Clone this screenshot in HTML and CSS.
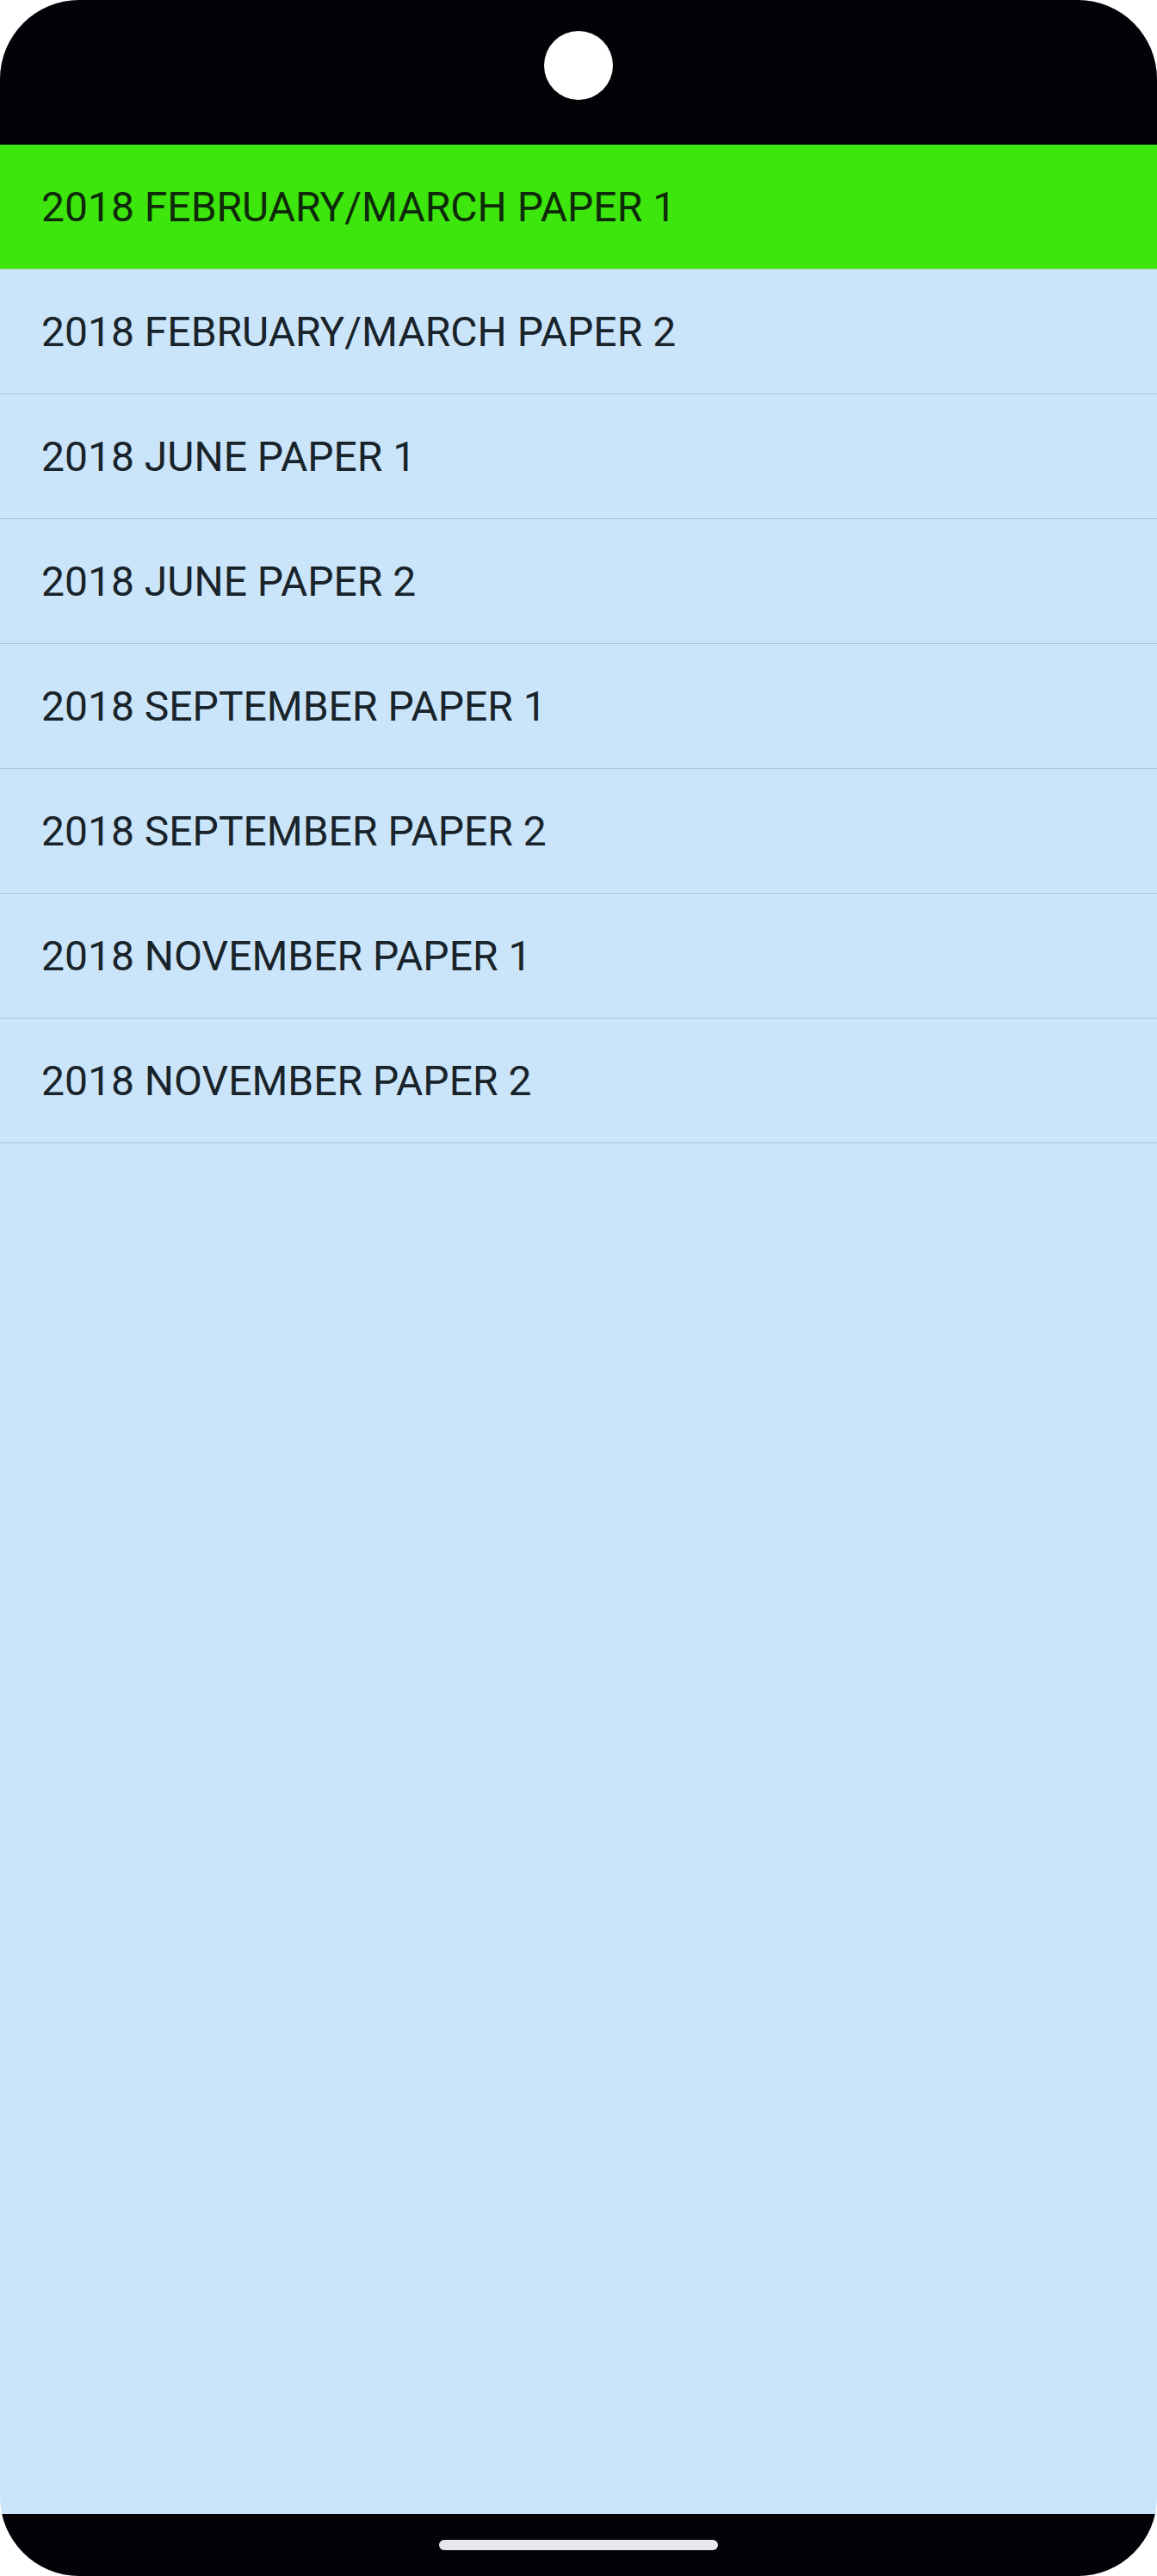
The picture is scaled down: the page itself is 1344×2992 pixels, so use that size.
FILE: index.html
```html
<!DOCTYPE html>
<html lang="en">
<head>
    <meta charset="UTF-8">
    <meta name="viewport" content="width=device-width, initial-scale=1.0">
    <title>2018 Papers</title>
    <link rel="stylesheet" href="styles.css">
</head>
<body>
    <div class="phone">
        <div class="status-bar">
            <div class="camera"></div>
        </div>

        <ul class="paper-list">
            <li class="paper selected">2018 FEBRUARY/MARCH PAPER 1</li>
            <li class="paper">2018 FEBRUARY/MARCH PAPER 2</li>
            <li class="paper">2018 JUNE PAPER 1</li>
            <li class="paper">2018 JUNE PAPER 2</li>
            <li class="paper">2018 SEPTEMBER PAPER 1</li>
            <li class="paper">2018 SEPTEMBER PAPER 2</li>
            <li class="paper">2018 NOVEMBER PAPER 1</li>
            <li class="paper">2018 NOVEMBER PAPER 2</li>
        </ul>

        <div class="nav-bar">
            <div class="home-pill"></div>
        </div>
    </div>
</body>
</html>
```

FILE: styles.css
```css
body {
    margin: 0;
    background: #fff;
    font-family: Roboto, "Noto Sans", sans-serif;
}
.phone {
    width: 1344px;
    height: 2992px;
    border-radius: 92px;
    overflow: hidden;
    background: #cae5fa;
    display: flex;
    flex-direction: column;
}
.status-bar {
    height: 168px;
    flex-shrink: 0;
    background: #040206;
    display: flex;
    justify-content: center;
    padding-top: 36px;
    box-sizing: border-box;
}
.camera {
    width: 80px;
    height: 80px;
    border-radius: 50%;
    background: #fff;
}
.paper-list {
    list-style: none;
    margin: 0;
    padding: 0;
    flex: 1;
}
.paper {
    height: 144px;
    display: flex;
    align-items: center;
    padding-left: 48px;
    font-size: 48px;
    color: #19232a;
    border-bottom: 1px solid #a8c3d9;
}
.paper.selected {
    background: #3de60c;
    color: #0f2a0a;
    border-bottom-color: #9fdc8a;
}
.nav-bar {
    height: 72px;
    flex-shrink: 0;
    background: #040206;
    display: flex;
    justify-content: center;
    padding-top: 30px;
    box-sizing: border-box;
}
.home-pill {
    width: 324px;
    height: 12px;
    border-radius: 6px;
    background: #e8e6ea;
}
```
